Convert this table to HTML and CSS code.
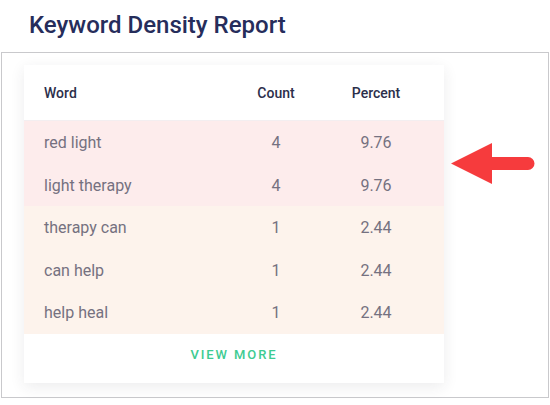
FILE: index.html
```html
<!DOCTYPE html>
<html>
<head>
<meta charset="utf-8">
<link rel="stylesheet" href="styles.css">
</head>
<body>
<h1 class="title">Keyword Density Report</h1>
<div class="frame">
  <div class="card">
    <div class="row head">
      <div class="c-word">Word</div>
      <div class="c-num">Count</div>
      <div class="c-num">Percent</div>
    </div>
    <div class="row hi">
      <div class="c-word">red light</div>
      <div class="c-num">4</div>
      <div class="c-num">9.76</div>
    </div>
    <div class="row hi">
      <div class="c-word">light therapy</div>
      <div class="c-num">4</div>
      <div class="c-num">9.76</div>
    </div>
    <div class="row mid">
      <div class="c-word">therapy can</div>
      <div class="c-num">1</div>
      <div class="c-num">2.44</div>
    </div>
    <div class="row mid">
      <div class="c-word">can help</div>
      <div class="c-num">1</div>
      <div class="c-num">2.44</div>
    </div>
    <div class="row mid">
      <div class="c-word">help heal</div>
      <div class="c-num">1</div>
      <div class="c-num">2.44</div>
    </div>
    <div class="more">VIEW MORE</div>
  </div>
  <svg class="arrow" width="84" height="42" viewBox="0 0 84 42">
    <path d="M0 20.5 L41 0 L41 14 L77 14 A6.5 6.5 0 0 1 77 27 L41 27 L41 41 Z" fill="#f63b3d"/>
  </svg>
</div>
</body>
</html>
```
FILE: styles.css
```css
html, body {
  margin: 0;
  padding: 0;
  background: #fff;
}
body {
  font-family: Roboto, "Liberation Sans", sans-serif;
  width: 550px;
  height: 405px;
  overflow: hidden;
}
.title {
  margin: 0;
  padding: 10px 0 0 29px;
  height: 52px;
  box-sizing: border-box;
  font-size: 24px;
  font-weight: 500;
  line-height: 30px;
  color: #262d5b;
}
.frame {
  margin-left: 1px;
  width: 548px;
  height: 346px;
  box-sizing: border-box;
  border: 1px solid #c9c9cc;
  padding: 12px 0 0 22px;
  display: flex;
  align-items: flex-start;
}
.card {
  width: 420px;
  background: #fff;
  box-shadow: 0 4px 14px rgba(40, 40, 60, 0.09);
}
.row {
  display: grid;
  grid-template-columns: 1fr 100px 100px;
  padding: 1px 18px 0 20px;
  box-sizing: border-box;
  align-items: center;
  height: 42.5px;
  font-size: 16px;
  color: #757180;
}
.row.head {
  height: 56px;
  padding-top: 0;
  font-size: 14px;
  font-weight: 500;
  color: #2c2f4b;
  border-bottom: 1px solid #f3eef0;
}
.row.hi {
  background: #fdecec;
}
.row.mid {
  background: #fdf3ec;
}
.c-num {
  text-align: center;
}
.more {
  height: 49.5px;
  padding-bottom: 8px;
  box-sizing: border-box;
  display: flex;
  align-items: center;
  justify-content: center;
  font-size: 13px;
  font-weight: 500;
  letter-spacing: 1.9px;
  color: #3ecb92;
}
.arrow {
  margin: 78px 0 0 7px;
}
```
